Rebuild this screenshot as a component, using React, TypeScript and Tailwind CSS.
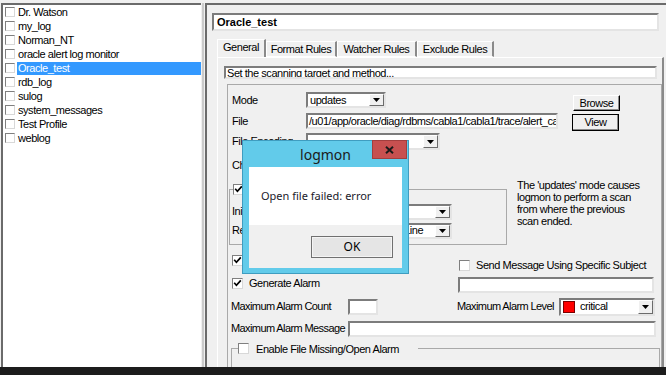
import React from 'react';

// ─── Small classic-Windows widgets ───────────────────────────────────────────
const sunken =
    'border-2 border-t-[#7c7c7c] border-l-[#7c7c7c] border-r-[#e4e4e4] border-b-[#e4e4e4] bg-white';

function Check({ checked, disabled, small }: { checked?: boolean; disabled?: boolean; small?: boolean }) {
    return (
        <span
            className={`${small ? 'w-[10px] h-[10px]' : 'w-[11px] h-[11px]'} shrink-0 flex items-center justify-center border border-t-[#7f7f7f] border-l-[#7f7f7f] border-r-[#d8d8d8] border-b-[#d8d8d8] ${disabled ? 'bg-[#cfcfcf]' : 'bg-white'}`}
        >
            {checked && (
                <svg viewBox="0 0 9 9" className="w-[9px] h-[9px]">
                    <path d="M1.2 3.8 L3.4 6.2 L7.8 1.4" stroke="#000" strokeWidth="1.7" fill="none" />
                </svg>
            )}
        </span>
    );
}

function Arrow() {
    return (
        <span className="w-[15px] h-full shrink-0 flex items-center justify-center bg-[#f0f0f0] border border-t-white border-l-white border-r-[#6b6b6b] border-b-[#6b6b6b]">
            <svg viewBox="0 0 7 4" className="w-[7px] h-[4px]">
                <path d="M0 0 H7 L3.5 4 Z" fill="#000" />
            </svg>
        </span>
    );
}

function Select({ className, children }: { className: string; children?: React.ReactNode }) {
    return (
        <div className={`${sunken} ${className} flex items-stretch shrink-0`}>
            <div className="flex-1 flex items-center pl-[2px] overflow-hidden whitespace-nowrap">{children}</div>
            <Arrow />
        </div>
    );
}

function Btn({ className, children, def }: { className: string; children: React.ReactNode; def?: boolean }) {
    return (
        <div
            className={`${className} shrink-0 flex items-center justify-center bg-[#f0f0f0] border ${def ? 'border-black' : 'border-t-white border-l-white border-r-black border-b-black'} shadow-[inset_-1px_-1px_0_#8a8a8a]`}
        >
            {children}
        </div>
    );
}

const profiles = [
    'Dr. Watson',
    'my_log',
    'Norman_NT',
    'oracle alert log monitor',
    'Oracle_test',
    'rdb_log',
    'sulog',
    'system_messages',
    'Test Profile',
    'weblog',
];

const tabs = [
    { name: 'General', w: 'w-[49px]', active: true },
    { name: 'Format Rules', w: 'w-[71px]' },
    { name: 'Watcher Rules', w: 'w-[80px]' },
    { name: 'Exclude Rules', w: 'w-[77px]' },
];

export default function App() {
    return (
        <div className="w-[666px] h-[375px] bg-[#f0f0f0] relative overflow-hidden flex flex-col font-['Liberation_Sans',Arial,sans-serif] text-[11px] tracking-[-0.45px] text-black">
            <div className="flex h-[367px] pt-[3px] pl-[1px]">
                {/* Profile list */}
                <div className="w-[200px] h-full bg-white border-l-2 border-t-2 border-[#6b6b6b]">
                    {profiles.map((p) => {
                        const sel = p === 'Oracle_test';
                        return (
                            <div key={p} className="h-[14px] flex items-center pl-[2px]">
                                <Check small />
                                <span
                                    className={`ml-[2px] flex-1 h-[13px] leading-[13px] pl-[1px] whitespace-nowrap ${sel ? 'bg-[#3399ff] text-white' : ''}`}
                                >
                                    {p}
                                </span>
                            </div>
                        );
                    })}
                </div>

                {/* Splitter */}
                <div className="w-[4px] h-full border-x border-[#f0f0f0] bg-[#cbcbcb]" />

                {/* Detail panel */}
                <div className="flex-1 h-full border-l-2 border-t-2 border-[#6b6b6b] pt-[8px] flex flex-col">
                    <div className={`${sunken} ml-[5px] w-[447px] h-[18px] flex items-center pl-[3px] font-bold tracking-normal`}>
                        Oracle_test
                    </div>

                    {/* Tabs */}
                    <div className="mt-[9px] ml-[10px] h-[17px] flex items-end">
                        {tabs.map((t) => (
                            <div
                                key={t.name}
                                className={`${t.w} ${t.active ? 'h-[18px] pb-[2px]' : 'h-[16px] border-b border-b-white'} flex items-center justify-center bg-[#f0f0f0] border-t border-l border-t-white border-l-white border-r-2 border-r-[#8a8a8a] whitespace-nowrap`}
                            >
                                {t.name}
                            </div>
                        ))}
                    </div>

                    {/* Tab page */}
                    <div className="ml-[10px] w-[447px] flex-1 min-h-0 border-t border-l border-white border-r-2 border-r-[#8a8a8a] flex flex-col">
                        <div className={`${sunken} mt-[8px] ml-[6px] w-[433px] h-[13px] leading-[10px] pl-[1px] overflow-hidden whitespace-nowrap`}>
                            Set the scanning target and method...
                        </div>

                        {/* Main group */}
                        <div className="mt-[5px] ml-[9px] w-[435px] flex-1 min-h-0 overflow-hidden border border-b-0 border-[#a9a9a9] flex flex-col">
                            <div className="mt-[7px] h-[16px] flex items-start">
                                <span className="w-[78px] h-[16px] pl-[4px] flex items-center">Mode</span>
                                <Select className="w-[80px] h-[16px]">updates</Select>
                                <Btn className="ml-[187px] mt-[3px] w-[47px] h-[16px]">Browse</Btn>
                            </div>

                            <div className="mt-[5px] flex items-start">
                                <span className="w-[78px] h-[16px] pl-[4px] flex items-center">File</span>
                                <div className={`${sunken} w-[252px] h-[16px] flex items-center pl-[1px] overflow-hidden whitespace-nowrap`}>
                                    /u01/app/oracle/diag/rdbms/cabla1/cabla1/trace/alert_cabla1.log
                                </div>
                                <Btn def className="ml-[14px] mt-[1px] w-[47px] h-[17px]">View</Btn>
                            </div>

                            <div className="mt-[2px] flex items-center">
                                <span className="w-[78px] pl-[4px] whitespace-nowrap">File Encoding</span>
                                <Select className="w-[134px] h-[17px]" />
                            </div>

                            <div className="mt-[7px] h-[16px] flex items-center">
                                <span className="w-[78px] pl-[4px] whitespace-nowrap">Check Interval</span>
                                <div className={`${sunken} w-[50px] h-[16px]`} />
                            </div>

                            {/* Scan position sub-group + explanation */}
                            <div className="mt-[6px] flex items-start">
                                <fieldset className="mt-[2px] ml-[1px] w-[278px] border border-[#a9a9a9] pb-[5px]">
                                    <legend className="ml-[3px] pr-[3px] flex items-center gap-[5px]">
                                        <Check checked />
                                        <span>Scan Range</span>
                                    </legend>
                                    <div className="mt-[6px] h-[16px] flex items-center">
                                        <span className="w-[76px] pl-[2px] whitespace-nowrap">Initial Position</span>
                                        <Select className="w-[146px] h-[16px]">Start at End of File</Select>
                                    </div>
                                    <div className="mt-[3px] h-[16px] flex items-center">
                                        <span className="w-[76px] pl-[2px] whitespace-nowrap">Record Type</span>
                                        <Select className="w-[146px] h-[16px]">One Log Record per Line</Select>
                                    </div>
                                </fieldset>
                                <p className="ml-[10px] leading-[12px] w-[128px]">
                                    The 'updates' mode causes logmon to perform a scan from where the previous scan ended.
                                </p>
                            </div>

                            {/* Alarm options */}
                            <div className="flex items-start">
                                <div className="w-[230px]">
                                    <div className="mt-[10px] h-[11px] pl-[4px] flex items-center gap-[6px]">
                                        <Check checked />
                                        <span>Send Alarm Messages</span>
                                    </div>
                                    <div className="mt-[12px] h-[11px] pl-[4px] flex items-center gap-[6px]">
                                        <Check checked />
                                        <span>Generate Alarm</span>
                                    </div>
                                </div>
                                <div>
                                    <div className="mt-[15px] h-[11px] pl-[1px] flex items-center gap-[6px] whitespace-nowrap">
                                        <Check />
                                        <span>Send Message Using Specific Subject</span>
                                    </div>
                                    <div className={`${sunken} mt-[6px] w-[196px] h-[16px]`} />
                                </div>
                            </div>

                            <div className="mt-[5px] h-[18px] flex items-center">
                                <span className="w-[120px] pl-[3px] whitespace-nowrap tracking-[-0.6px]">Maximum Alarm Count</span>
                                <div className={`${sunken} w-[30px] h-[16px]`} />
                                <span className="ml-[79px] w-[102px] whitespace-nowrap tracking-[-0.6px]">Maximum Alarm Level</span>
                                <Select className="w-[96px] h-[18px]">
                                    <span className="w-[12px] h-[12px] bg-[#ff0000] border border-[#7a0000] mr-[5px]" />
                                    critical
                                </Select>
                            </div>

                            <div className="mt-[5px] h-[16px] flex items-center">
                                <span className="w-[120px] pl-[3px] whitespace-nowrap tracking-[-0.6px]">Maximum Alarm Message</span>
                                <div className={`${sunken} w-[308px] h-[16px]`} />
                            </div>

                            <fieldset className="mt-[4px] ml-[3px] w-[429px] border border-[#a9a9a9] pb-[6px]">
                                <legend className="ml-[6px] w-[180px] flex items-center gap-[7px]">
                                    <Check />
                                    <span>Enable File Missing/Open Alarm</span>
                                </legend>
                                <div className="mt-[8px] pl-[8px] flex items-center gap-[7px] text-[#9a9a9a]">
                                    <Check disabled />
                                    <span>Show Missing File Alarm</span>
                                </div>
                            </fieldset>
                        </div>
                    </div>
                </div>
            </div>

            <div className="h-[8px] bg-[#1c1c1c]" />

            {/* Message box */}
            <div className="absolute left-[242px] top-[140px] w-[167px] h-[134px] bg-[#62cbea] border border-[#3f9dc0] flex flex-col font-['Noto_Sans',sans-serif] tracking-normal">
                <div className="h-[26px] flex items-center justify-center text-[14px] text-[#1b1b1b]">logmon</div>
                <div className="absolute right-[1px] top-[-1px] w-[35px] h-[19px] bg-[#c75050] border border-[#a23e3e] flex items-center justify-center">
                    <svg viewBox="0 0 9 8" className="w-[9px] h-[8px]">
                        <path d="M1 0.8 L8 7.2 M8 0.8 L1 7.2" stroke="#1a1a1a" strokeWidth="2" />
                    </svg>
                </div>
                <div className="mx-[6px] h-[101px] bg-white flex flex-col">
                    <div className="h-[58px] flex items-center pl-[12px] text-[11px] text-[#1a1a2a]">Open file failed: error</div>
                    <div className="flex-1 bg-[#f0f0f0]">
                        <div className="mt-[11px] ml-[62px] w-[82px] h-[22px] border border-[#707070] bg-[#e5e5e5] shadow-[inset_0_0_0_1px_#f4f4f4] flex items-center justify-center text-[12px]">
                            OK
                        </div>
                    </div>
                </div>
            </div>
        </div>
    );
}
